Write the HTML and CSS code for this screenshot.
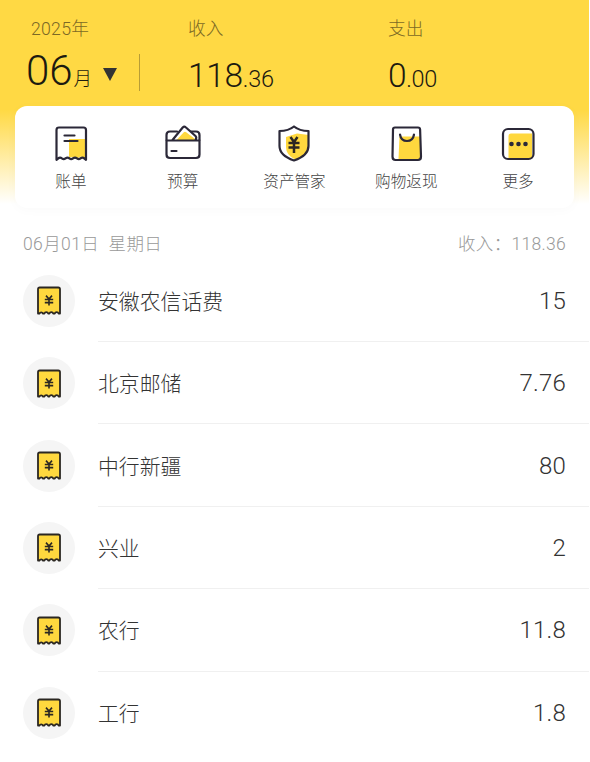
FILE: index.html
```html
<!DOCTYPE html>
<html lang="zh-CN">
<head>
<meta charset="utf-8">
<title>账本</title>
<link rel="stylesheet" href="styles.css">
</head>
<body>
<svg class="defs" width="0" height="0" aria-hidden="true">
  <symbol id="receipt" viewBox="0 0 26 30">
    <path d="M2 27.500V3.200Q2 1.500 3.700 1.500H22.300Q24 1.500 24 3.200V27.500L22.600 27.500A2 2 0 0 0 18.800 27.500L17.200 27.500A2 2 0 0 0 13.400 27.500L12.200 27.500A2 2 0 0 0 8.400 27.500L7 27.500A2 2 0 0 0 3.400 27.500Z" fill="#ffd83e" stroke="#2b2722" stroke-width="1.800" stroke-linejoin="round"/>
    <path d="M10 9.600L13 13L16 9.600M8.800 13.500H17.200M8.800 16.600H17.200M13 13V19.600" fill="none" stroke="#2b2722" stroke-width="1.600"/>
  </symbol>
</svg>
<main class="page">
  <header class="top">
    <section class="summary">
      <div class="month">
        <div class="label">2025年</div>
        <div class="month-value"><span class="big">06</span><span class="unit">月</span><i class="arrow"></i></div>
      </div>
      <i class="rule"></i>
      <div class="stat income"><div class="label">收入</div><div class="amount">118<small>.36</small></div></div>
      <div class="stat"><div class="label">支出</div><div class="amount">0<small>.00</small></div></div>
    </section>
    <nav class="card">
      <a class="tool">
        <svg viewBox="0 0 38 38"><path d="M17 14H34V34L29 31.500L24 34L19.500 32L17 33Z" fill="#ffd83e"/><path d="M4.500 34.800V5Q4.500 2.500 7 2.500H31.500Q34 2.500 34 5V34.800L32.500 33.600Q30.500 31.700 28.500 33.400Q26.800 34.900 25 33.400Q23 31.700 21 33.400Q19.200 34.900 17.400 33.400Q15.500 31.700 13.500 33.400Q11.700 34.900 9.900 33.400Q8 31.700 6 33.600Z" class="line"/><path d="M12.500 10.500H22.500M12.500 16H25.500" class="line"/></svg>
        <span>账单</span>
      </a>
      <a class="tool">
        <svg viewBox="0 0 38 38"><path d="M2.500 15V10Q2.500 6.500 6 6.500H13M27 6.500H32Q35.500 6.500 35.500 10V15" class="line"/><path d="M8.500 15L18.700 2.500Q20.200 .9 21.700 2.300L31.500 11Q33 12.500 31.500 15Z" fill="#fff"/><path d="M12.500 15L19.800 7.300Q21 6.200 22.200 7.300L31 14V15Z" fill="#ffd83e"/><path d="M8.500 15L18.700 2.500Q20.200 .9 21.700 2.300L31.500 11Q33 12.500 31.500 15M2.500 15.500H35.500V29.500Q35.500 33 32 33H6Q2.500 33 2.500 29.500ZM7.500 26H12.500" class="line"/></svg>
        <span>预算</span>
      </a>
      <a class="tool">
        <svg viewBox="0 0 38 38"><path d="M11 12L22 8.500L34 10V22Q34 30 20 34.500Q11 30 11 22Z" fill="#ffd83e"/><path d="M19 1.500Q24.500 6 33.500 6V21Q33.500 30.500 19 35.500Q4.500 30.500 4.500 21V6Q13.500 6 19 1.500Z" class="line"/><path d="M15.500 12L19 17L22.500 12M13.500 18H24.500M13.500 22.500H24.500M19 17V28" class="yen"/></svg>
        <span>资产管家</span>
      </a>
      <a class="tool">
        <svg viewBox="0 0 38 38"><path d="M12.500 11.500H33L34 34H11.500Z" fill="#ffd83e"/><path d="M8 2.500H31Q33 2.500 33.100 4.500L34 31.500Q34 35 31 35H8.500Q5.500 35 5.500 31.500L6 4.500Q6 2.500 8 2.500Z" class="line"/><path d="M13 9.500Q14 16 20 16Q26 16 27 9.500" class="line"/></svg>
        <span>购物返现</span>
      </a>
      <a class="tool">
        <svg viewBox="0 0 38 38"><path d="M12 8.500H33V33H9.500V11Q9.500 8.500 12 8.500Z" fill="#ffd83e"/><rect x="4" y="4" width="30.500" height="30" rx="5" class="line"/><circle cx="12.500" cy="19" r="2.300"/><circle cx="19.500" cy="19" r="2.300"/><circle cx="26.500" cy="19" r="2.300"/></svg>
        <span>更多</span>
      </a>
    </nav>
  </header>
  <div class="day"><span class="date">06月01日&nbsp; 星期日</span><span class="day-sum">收入：<b>118.36</b></span></div>
  <ul class="list">
    <li><i class="badge"><svg><use href="#receipt"/></svg></i><div class="row"><span>安徽农信话费</span><b>15</b></div></li>
    <li><i class="badge"><svg><use href="#receipt"/></svg></i><div class="row"><span>北京邮储</span><b>7.76</b></div></li>
    <li><i class="badge"><svg><use href="#receipt"/></svg></i><div class="row"><span>中行新疆</span><b>80</b></div></li>
    <li><i class="badge"><svg><use href="#receipt"/></svg></i><div class="row"><span>兴业</span><b>2</b></div></li>
    <li><i class="badge"><svg><use href="#receipt"/></svg></i><div class="row"><span>农行</span><b>11.8</b></div></li>
    <li><i class="badge"><svg><use href="#receipt"/></svg></i><div class="row"><span>工行</span><b>1.8</b></div></li>
  </ul>
</main>
</body>
</html>
```
FILE: styles.css
```css
* { box-sizing: border-box; }
body { margin: 0; background: #fff; font-family: Roboto, "Noto Sans CJK SC", sans-serif; font-weight: 300; color: #333; }
.defs { display: block; height: 0; }
.page { width: 589px; height: 762px; overflow: hidden; }
.top { height: 224px; padding: 0 15px; background: linear-gradient(#ffd944 0, #ffd944 110px, #fff 204px); }
.summary { display: flex; height: 106px; padding: 18px 0 0 11px; }
.label { height: 22px; line-height: 22px; font-size: 17.700px; color: #7c6924; }
.month { width: 113px; flex: none; }
.month .label { padding-left: 5px; letter-spacing: .25px; }
.month-value { display: flex; align-items: baseline; height: 60px; line-height: 60px; margin-top: 1px; color: #1c1a10; }
.big { font-size: 42px; }
.unit { font-size: 18.500px; margin-left: 1px; }
.arrow { width: 0; height: 0; margin-left: 11px; border: 7.500px solid transparent; border-top: 13px solid #333; border-bottom: 0; align-self: center; margin-top: 6px; }
.rule { flex: none; width: 1px; height: 37px; margin-top: 36px; background: #b89d35; }
.stat { flex: none; width: 200px; }
.income { margin-left: 48px; }
.amount { height: 50px; line-height: 50px; margin-top: 11px; font-size: 33.500px; letter-spacing: -.3px; color: #1c1a10; white-space: nowrap; }
.amount small { font-size: 23.500px; letter-spacing: -.3px; }
.card { display: flex; height: 102px; border-radius: 12px; background: #fff; box-shadow: 0 2px 12px rgba(0, 0, 0, .025); }
.tool { flex: 1; display: flex; flex-direction: column; align-items: center; padding-top: 19px; font-size: 15.600px; line-height: 22px; color: #444; }
.tool svg { width: 38px; height: 38px; margin-bottom: 8px; fill: #2b2838; }
.tool .line { fill: none; stroke: #2b2838; stroke-width: 2.200; stroke-linecap: round; stroke-linejoin: round; }
.tool .yen { fill: none; stroke: #2b2722; stroke-width: 2.500; }
.day { display: flex; justify-content: space-between; height: 39px; padding: 1px 23px 0; line-height: 38px; font-size: 17.500px; color: #999; white-space: nowrap; }
.date { letter-spacing: .4px; }
.day-sum { letter-spacing: .3px; }
b { font-weight: 300; }
.list { list-style: none; margin: -3.400px 0 0; padding: 0; }
li { display: flex; align-items: center; height: 82.400px; padding-left: 23px; }
.badge { display: flex; align-items: center; justify-content: center; width: 52px; height: 52px; border-radius: 50%; background: #f5f5f5; }
.badge svg { width: 26px; height: 30px; margin-top: 1px; }
.row { flex: 1; display: flex; align-items: center; justify-content: space-between; height: 100%; margin-left: 23px; padding-right: 23px; border-bottom: 1px solid #f0f0f0; font-size: 20.850px; }
.row span { margin-top: -1px; }
.row b { font-size: 24px; letter-spacing: .2px; margin-top: 1px; }
li:last-child .row { border-bottom-color: transparent; }
```
